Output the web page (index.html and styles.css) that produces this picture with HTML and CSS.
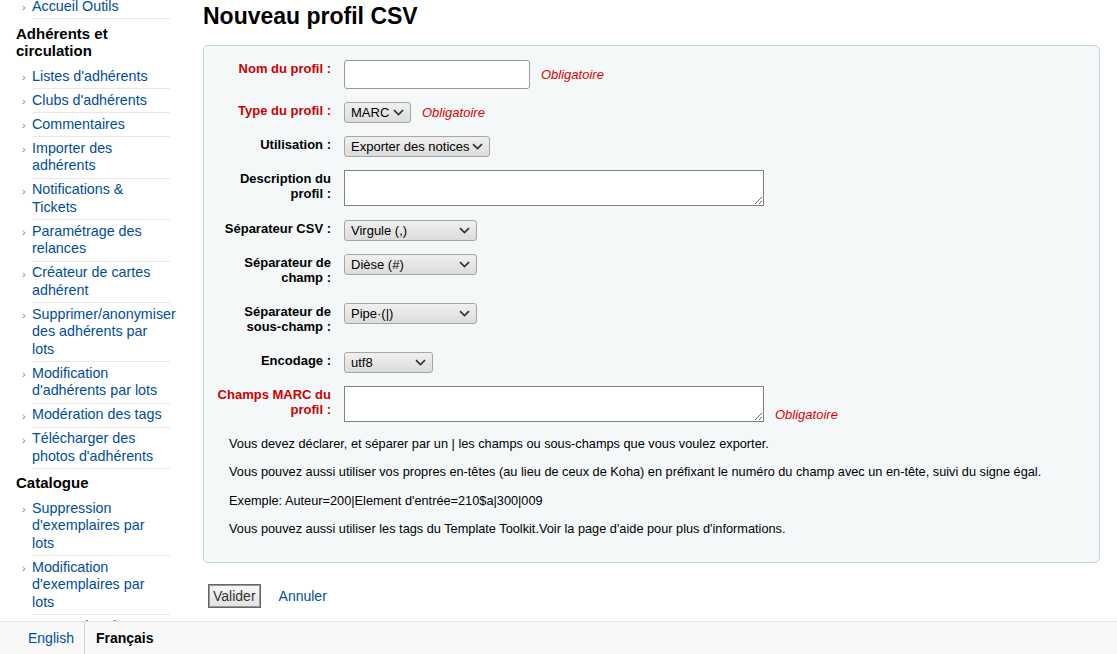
FILE: index.html
```html
<!DOCTYPE html>
<html lang="fr">
<head>
<meta charset="utf-8">
<title>Nouveau profil CSV</title>
<link rel="stylesheet" href="styles.css">
</head>
<body>
<div class="page">
  <aside class="sidebar">
    <ul class="navlist">
      <li><a href="#">Accueil Outils</a></li>
    </ul>
    <h5 class="navhead">Adhérents et circulation</h5>
    <ul class="navlist">
      <li><a href="#">Listes d'adhérents</a></li>
      <li><a href="#">Clubs d'adhérents</a></li>
      <li><a href="#">Commentaires</a></li>
      <li><a href="#">Importer des adhérents</a></li>
      <li><a href="#">Notifications &amp; Tickets</a></li>
      <li><a href="#">Paramétrage des relances</a></li>
      <li><a href="#">Créateur de cartes adhérent</a></li>
      <li><a href="#">Supprimer/anonymiser des adhérents par lots</a></li>
      <li><a href="#">Modification d'adhérents par lots</a></li>
      <li><a href="#">Modération des tags</a></li>
      <li><a href="#">Télécharger des photos d'adhérents</a></li>
    </ul>
    <h5 class="navhead navhead-cat">Catalogue</h5>
    <ul class="navlist">
      <li><a href="#">Suppression d'exemplaires par lots</a></li>
      <li><a href="#">Modification d'exemplaires par lots</a></li>
      <li><a href="#">Exportation des données</a></li>
    </ul>
  </aside>
  <main class="main">
    <h1 class="title">Nouveau profil CSV</h1>
    <form class="form">
      <fieldset class="rows">
        <div class="row">
          <label class="lbl required">Nom du profil :</label>
          <div class="ctl"><input class="text" type="text"><span class="req">Obligatoire</span></div>
        </div>
        <div class="row">
          <label class="lbl required">Type du profil :</label>
          <div class="ctl"><select class="sel w-marc"><option>MARC</option></select><span class="req">Obligatoire</span></div>
        </div>
        <div class="row">
          <label class="lbl">Utilisation :</label>
          <div class="ctl"><select class="sel w-use"><option>Exporter des notices</option></select></div>
        </div>
        <div class="row row-desc">
          <label class="lbl pad">Description du profil :</label>
          <div class="ctl ctl-area"><textarea class="area"></textarea></div>
        </div>
        <div class="row">
          <label class="lbl">Séparateur CSV :</label>
          <div class="ctl"><select class="sel w-sep"><option>Virgule (,)</option></select></div>
        </div>
        <div class="row">
          <label class="lbl pad">Séparateur de champ :</label>
          <div class="ctl"><select class="sel w-sep"><option>Dièse (#)</option></select></div>
        </div>
        <div class="row">
          <label class="lbl pad">Séparateur de sous-champ :</label>
          <div class="ctl"><select class="sel w-sep"><option>Pipe·(|)</option></select></div>
        </div>
        <div class="row">
          <label class="lbl">Encodage :</label>
          <div class="ctl"><select class="sel w-enc"><option>utf8</option></select></div>
        </div>
        <div class="row">
          <label class="lbl required pad">Champs MARC du profil :</label>
          <div class="ctl ctl-area"><textarea class="area"></textarea><span class="req">Obligatoire</span></div>
        </div>
        <div class="hints">
          <p>Vous devez déclarer, et séparer par un | les champs ou sous-champs que vous voulez exporter.</p>
          <p>Vous pouvez aussi utiliser vos propres en-têtes (au lieu de ceux de Koha) en préfixant le numéro du champ avec un en-tête, suivi du signe égal.</p>
          <p>Exemple: Auteur=200|Element d'entrée=210$a|300|009</p>
          <p>Vous pouvez aussi utiliser les tags du Template Toolkit.Voir la page d'aide pour plus d'informations.</p>
        </div>
      </fieldset>
      <div class="actions">
        <button type="button" class="btn">Valider</button>
        <a href="#" class="cancel">Annuler</a>
      </div>
    </form>
  </main>
</div>
<footer class="langbar">
  <a href="#" class="lang">English</a>
  <span class="lang current">Français</span>
</footer>
</body>
</html>
```

FILE: styles.css
```css
html, body {
  margin: 0;
  padding: 0;
  background: #ffffff;
  font-family: "Liberation Sans", Arial, sans-serif;
  color: #000;
}

.page {
  display: grid;
  grid-template-columns: 188px 897px;
  column-gap: 15px;
  align-items: start;
}

a {
  color: #004d99;
  text-decoration: none;
}

/* Sidebar */
.sidebar {
  margin-top: -5px;
  padding-left: 16px;
}

.navhead {
  margin: 6px 0 6px 0;
  font-size: 15px;
  line-height: 17px;
  font-weight: bold;
  color: #000;
  width: 150px;
}

.navhead-cat {
  margin-top: 5px;
}

.navlist {
  list-style: none;
  margin: 0;
  padding: 0 0 0 16px;
}

.navlist li {
  position: relative;
  width: 132px;
  padding: 2.75px 6px 2.75px 0;
  border-bottom: 1px solid #e8e8e8;
  font-size: 14.3px;
  line-height: 17.5px;
}

.navlist li::before {
  content: "›";
  position: absolute;
  left: -10px;
  top: 4px;
  font-size: 11px;
  color: #888;
}

/* Main */
.main {
  padding-top: 3px;
}

.title {
  margin: 0;
  font-size: 23px;
  line-height: 26px;
  font-weight: bold;
  color: #000;
}

.form {
  margin-top: 16px;
}

.rows {
  margin: 0;
  border: 1px solid #b9d8d9;
  border-radius: 5px;
  background: #f4f8f9;
  padding: 14px 10px 26px 10px;
  display: flex;
  flex-direction: column;
  gap: 13px;
}

.row {
  display: flex;
  align-items: flex-start;
}

.row-desc {
  margin-bottom: 1px;
}

.lbl {
  flex: 0 0 117px;
  margin-right: 13px;
  text-align: right;
  font-size: 13px;
  line-height: 15px;
  font-weight: bold;
  padding-top: 1px;
  color: #000;
}

.lbl.pad {
  padding-bottom: 5px;
}

.lbl.required {
  color: #cc0000;
}

.ctl {
  display: flex;
  align-items: center;
  font-size: 13px;
  line-height: 15px;
}

.ctl-area {
  align-items: flex-end;
}

.req {
  margin-left: 11px;
  color: #dd0000;
  font-style: italic;
  font-size: 13px;
  line-height: 15px;
}

.text {
  box-sizing: border-box;
  width: 186px;
  height: 29px;
  border: 1px solid #999;
  border-radius: 3px;
  background: #fff;
  margin: 0;
}

.sel {
  -webkit-appearance: none;
  appearance: none;
  box-sizing: border-box;
  height: 21px;
  margin: 0;
  padding: 0 14px 0 6px;
  border: 1px solid #a6a6a6;
  border-radius: 3px;
  background-color: #e6e6e6;
  background-image: url("data:image/svg+xml;utf8,<svg xmlns='http://www.w3.org/2000/svg' width='11' height='7' viewBox='0 0 11 7'><path d='M1 1.2 L5.5 5.5 L10 1.2' fill='none' stroke='%23333' stroke-width='1.7'/></svg>"), linear-gradient(#f0f0f0, #dcdcdc);
  background-repeat: no-repeat, no-repeat;
  background-position: right 6px center, 0 0;
  background-size: 11px 7px, 100% 100%;
  font-family: "Liberation Sans", Arial, sans-serif;
  font-size: 13px;
  line-height: 19px;
  color: #000;
}

.w-marc { width: 67px; }
.w-use { width: 146px; }
.w-sep { width: 133px; }
.w-enc { width: 89px; }

.area {
  box-sizing: border-box;
  width: 420px;
  height: 36px;
  margin: 0;
  border: 1px solid #808080;
  background: #fff;
  display: block;
  font-family: "Liberation Sans", Arial, sans-serif;
}

.hints {
  padding-left: 15px;
  margin-top: 1px;
}

.hints p {
  margin: 0 0 13.3px 0;
  font-size: 12.75px;
  line-height: 15px;
}

.hints p:last-child {
  margin-bottom: 0;
}

.actions {
  margin-top: 21px;
  padding-left: 5px;
  display: flex;
  align-items: center;
  gap: 18px;
}

.btn {
  box-sizing: border-box;
  height: 24px;
  padding: 0 4px;
  border: 1px solid #666;
  box-shadow: inset 0 0 0 1px #999;
  border-radius: 0;
  background: linear-gradient(#f8f8f8, #e2e2e2);
  font-family: "Liberation Sans", Arial, sans-serif;
  font-size: 14px;
  color: #333;
}

.cancel {
  font-size: 14px;
}

/* Language footer */
.langbar {
  position: fixed;
  left: 0;
  right: 0;
  bottom: 0;
  height: 32px;
  background: #f8f8f8;
  border-top: 1px solid #e2e2e2;
  display: flex;
  align-items: stretch;
}

.lang {
  display: flex;
  align-items: center;
  font-size: 14px;
  padding: 0 10px;
}

.lang:first-child {
  padding-left: 28px;
  border-right: 1px solid #d0d0d0;
}

.lang.current {
  font-weight: bold;
  color: #000;
  padding-left: 11px;
}
```
